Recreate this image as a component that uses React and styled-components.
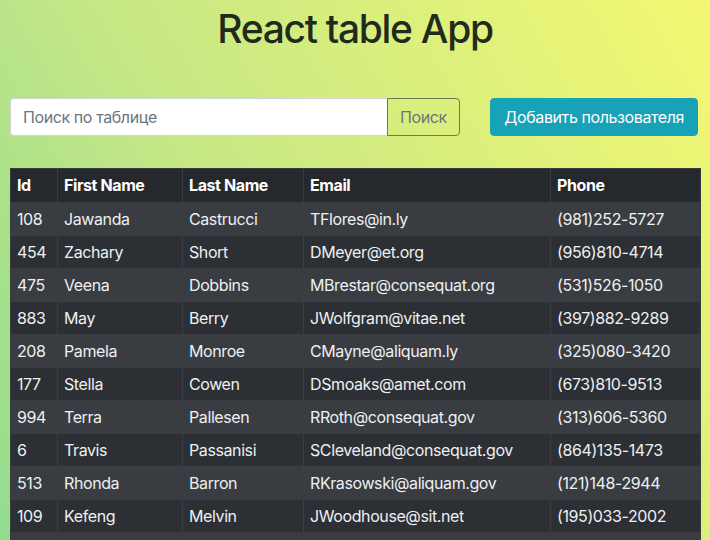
import React from "react";
import styled, { createGlobalStyle } from "styled-components";

const GlobalStyle = createGlobalStyle`
  *, *::before, *::after {
    box-sizing: border-box;
  }
  html, body {
    margin: 0;
    padding: 0;
    height: 100%;
  }
  body {
    font-family: Inter, "Noto Sans", sans-serif;
    font-size: 16px;
    line-height: 1.5;
    letter-spacing: -0.4px;
    color: #212529;
    background: linear-gradient(60deg, #93dc8e 0%, #c6e785 40%, #f3f872 100%);
    background-attachment: fixed;
    min-height: 540px;
  }
`;

const Page = styled.div`
  padding: 0 10px;
`;

const Title = styled.h1`
  margin: 0;
  padding-top: 5px;
  font-size: 39px;
  font-weight: 500;
  line-height: 48px;
  letter-spacing: -1.3px;
  text-align: center;
  color: #1f2b1d;
`;

const Toolbar = styled.div`
  display: flex;
  align-items: center;
  justify-content: space-between;
  margin-top: 45px;
  margin-bottom: 32px;
`;

const SearchGroup = styled.div`
  display: flex;
  width: 450px;
  height: 38px;
`;

const SearchInput = styled.input`
  flex: 1;
  min-width: 0;
  border: 1px solid #ced4da;
  border-right: none;
  border-radius: 4px 0 0 4px;
  background: #fff;
  padding: 0 12px;
  font: inherit;
  letter-spacing: inherit;
  color: #495057;
  &::placeholder {
    color: #6c757d;
  }
`;

const SearchButton = styled.button`
  width: 73px;
  border: 1px solid #6b7a55;
  border-radius: 0 4px 4px 0;
  background: transparent;
  color: #6c757d;
  font: inherit;
  letter-spacing: inherit;
  padding: 0;
`;

const AddButton = styled.button`
  height: 38px;
  margin-right: 2px;
  padding: 0 13px;
  border: 1px solid #17a2b8;
  border-radius: 4px;
  background: #17a2b8;
  color: #fff;
  font: inherit;
  letter-spacing: inherit;
`;

const Table = styled.table`
  width: 690px;
  border-collapse: collapse;
  table-layout: fixed;
  background: #2d3034;
  color: #fff;
  border: 1px solid #1f2124;
`;

const HeadCell = styled.th`
  text-align: left;
  font-weight: 700;
  padding: 4px 6px 5px;
  background: #25282c;
  border: 1px solid #383b40;
  width: ${(p) => p.$w}px;
`;

const Row = styled.tr`
  background: ${(p) => (p.$odd ? "#393c41" : "#2c2f33")};
`;

const Cell = styled.td`
  padding: 4px 6px;
  border: 1px solid #3a3d42;
  color: #eef0f2;
  white-space: nowrap;
  overflow: hidden;
`;

const columns = [
  { key: "id", label: "Id", w: 47 },
  { key: "first", label: "First Name", w: 125 },
  { key: "last", label: "Last Name", w: 121 },
  { key: "email", label: "Email", w: 247 },
  { key: "phone", label: "Phone", w: 150 },
];

const rows = [
  { id: 108, first: "Jawanda", last: "Castrucci", email: "TFlores@in.ly", phone: "(981)252-5727" },
  { id: 454, first: "Zachary", last: "Short", email: "DMeyer@et.org", phone: "(956)810-4714" },
  { id: 475, first: "Veena", last: "Dobbins", email: "MBrestar@consequat.org", phone: "(531)526-1050" },
  { id: 883, first: "May", last: "Berry", email: "JWolfgram@vitae.net", phone: "(397)882-9289" },
  { id: 208, first: "Pamela", last: "Monroe", email: "CMayne@aliquam.ly", phone: "(325)080-3420" },
  { id: 177, first: "Stella", last: "Cowen", email: "DSmoaks@amet.com", phone: "(673)810-9513" },
  { id: 994, first: "Terra", last: "Pallesen", email: "RRoth@consequat.gov", phone: "(313)606-5360" },
  { id: 6, first: "Travis", last: "Passanisi", email: "SCleveland@consequat.gov", phone: "(864)135-1473" },
  { id: 513, first: "Rhonda", last: "Barron", email: "RKrasowski@aliquam.gov", phone: "(121)148-2944" },
  { id: 109, first: "Kefeng", last: "Melvin", email: "JWoodhouse@sit.net", phone: "(195)033-2002" },
  { id: 365, first: "Ann", last: "Kramer", email: "AKramer@lorem.com", phone: "(802)455-1190" },
];

export default function App() {
  return (
    <>
      <GlobalStyle />
      <Page>
        <Title>React table App</Title>
        <Toolbar>
          <SearchGroup>
            <SearchInput placeholder="Поиск по таблице" />
            <SearchButton>Поиск</SearchButton>
          </SearchGroup>
          <AddButton>Добавить пользователя</AddButton>
        </Toolbar>
        <Table>
          <thead>
            <tr>
              {columns.map((c) => (
                <HeadCell key={c.key} $w={c.w}>
                  {c.label}
                </HeadCell>
              ))}
            </tr>
          </thead>
          <tbody>
            {rows.map((r, i) => (
              <Row key={r.id} $odd={i % 2 === 0}>
                {columns.map((c) => (
                  <Cell key={c.key}>{r[c.key]}</Cell>
                ))}
              </Row>
            ))}
          </tbody>
        </Table>
      </Page>
    </>
  );
}
